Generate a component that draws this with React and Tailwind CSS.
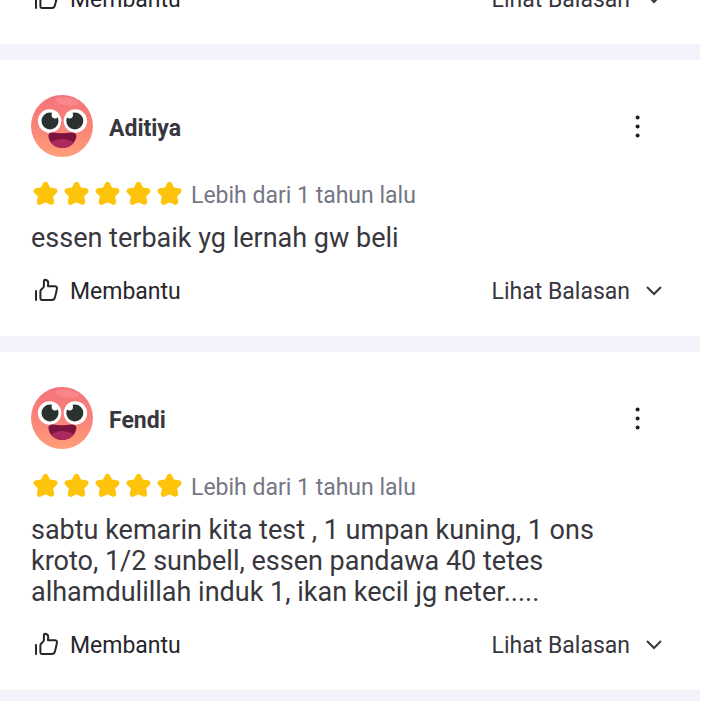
import React, { useState } from 'react';

const reviews = [
  {
    id: 1,
    name: 'Aditiya',
    rating: 5,
    time: 'Lebih dari 1 tahun lalu',
    text: 'essen terbaik yg lernah gw beli',
  },
  {
    id: 2,
    name: 'Fendi',
    rating: 5,
    time: 'Lebih dari 1 tahun lalu',
    text: 'sabtu kemarin kita test , 1 umpan kuning, 1 ons kroto, 1/2 sunbell, essen pandawa 40 tetes alhamdulillah induk 1, ikan kecil jg neter.....',
  },
];

const Avatar = ({ id }) => (
  <svg viewBox="0 0 62 62" className="size-[62px] shrink-0" aria-hidden="true">
    <defs>
      <linearGradient id={`face-${id}`} x1="0" y1="0" x2="0" y2="1">
        <stop offset="0" stopColor="#f3737a" />
        <stop offset="0.5" stopColor="#f98279" />
        <stop offset="1" stopColor="#ff9f78" />
      </linearGradient>
      <clipPath id={`mouth-${id}`}>
        <path d="M17.4 41 C17.4 38.4 19.4 37.2 22 37.6 Q31 39 40 37.6 C43 37.2 45.4 38.4 45.4 41 C44.8 47.5 39 53 31.4 53 C23.8 53 18 47.5 17.4 41Z" />
      </clipPath>
    </defs>
    <circle cx="31" cy="31" r="31" fill={`url(#face-${id})`} />
    <ellipse cx="36" cy="6.5" rx="12" ry="4" fill="#f8868b" transform="rotate(8 36 6.5)" />
    {/* eyes */}
    <circle cx="18.6" cy="26" r="11.7" fill="#fff" />
    <circle cx="44.4" cy="26" r="11.7" fill="#fff" />
    <circle cx="19" cy="26" r="8.5" fill="#2b312f" />
    <circle cx="43.8" cy="26" r="8.5" fill="#2b312f" />
    <circle cx="24" cy="20" r="3.4" fill="#fff" />
    <circle cx="38.6" cy="20" r="3.4" fill="#fff" />
    {/* mouth */}
    <g clipPath={`url(#mouth-${id})`}>
      <rect x="15" y="35" width="32" height="20" fill="#7c1240" />
      <ellipse cx="31.4" cy="50.5" rx="12.5" ry="6.5" fill="#ab2a5b" />
    </g>
  </svg>
);

const Star = () => (
  <svg viewBox="0 0 25 25" className="size-[25px]" aria-hidden="true">
    <path
      d="M12.5 3.6 L15.1 9 L21.6 10 L17.1 14.6 L18.4 21 L12.5 18.2 L6.6 21 L7.9 14.6 L3.4 10 L9.9 9Z"
      fill="#fdc40b"
      stroke="#fdc40b"
      strokeWidth="5.6"
      strokeLinejoin="round"
    />
  </svg>
);

const ThumbIcon = () => (
  <svg
    viewBox="0 0 24 24"
    className="size-6"
    fill="none"
    stroke="currentColor"
    strokeWidth="2"
    strokeLinecap="round"
    strokeLinejoin="round"
    aria-hidden="true"
  >
    <path d="M2 13 V22" />
    <path d="M6.4 20.6 V13.4 Q6.4 12.4 7.1 11.7 L9.2 9.6 Q9.9 8.9 9.9 8 V3.6 Q9.9 1.8 11.2 1.8 C13.4 2.1 14.4 3.6 14.2 5.6 L14 8.2 H20.8 Q23.2 8.2 22.9 10.6 L22.2 14.6 L20.8 19.8 Q20.2 22 18 22 H7.8 Q6.4 22 6.4 20.6Z" />
  </svg>
);

const ReviewActions = () => {
  const [helpful, setHelpful] = useState(false);
  const [open, setOpen] = useState(false);

  return (
    <div className="flex items-center justify-between text-[23px] leading-8">
      <button
        type="button"
        aria-pressed={helpful}
        onClick={() => setHelpful(!helpful)}
        className="flex items-start gap-3 pl-[3px] text-[#26262b]"
      >
        <span className="pt-[2px]">
          <ThumbIcon />
        </span>
        Membantu
      </button>
      <button
        type="button"
        aria-expanded={open}
        onClick={() => setOpen(!open)}
        className="flex items-center gap-4 text-[#37373d]"
      >
        Lihat Balasan
        <svg viewBox="0 0 16 16" className="size-4" fill="none" stroke="currentColor" strokeWidth="2" aria-hidden="true">
          <path d="M1 3 L8 10 L15 3" />
        </svg>
      </button>
    </div>
  );
};

const ReviewCard = ({ review }) => (
  <article className="pt-[35px] pr-[39px] pb-7 pl-[31px]">
    <div className="flex items-center gap-4">
      <Avatar id={review.id} />
      <h3 className="grow pt-[6px] text-[23px] leading-8 font-bold text-[#37373d]">{review.name}</h3>
      <button type="button" aria-label="Opsi lainnya" className="flex size-12 items-center justify-center">
        <svg viewBox="0 0 24 24" className="size-6" fill="#1f1f23" aria-hidden="true">
          <circle cx="11.6" cy="3.5" r="2" />
          <circle cx="11.6" cy="12.5" r="2" />
          <circle cx="11.6" cy="21.5" r="2" />
        </svg>
      </button>
    </div>
    <div className="mt-[23px] flex items-start gap-[9px]">
      <div className="flex gap-[6px] pt-px pl-[2px]" role="img" aria-label={`${review.rating} dari 5`}>
        {Array.from({ length: review.rating }, (_, i) => (
          <Star key={i} />
        ))}
      </div>
      <span className="text-[23px] leading-8 text-[#747684]">{review.time}</span>
    </div>
    <p className="mt-[11px] mb-[22px] text-[27px] leading-[31px] text-[#37373d]">{review.text}</p>
    <ReviewActions />
  </article>
);

const Divider = () => <div className="mr-px h-4 bg-[#f5f2fc]" />;

export default function App() {
  return (
    <main className="min-h-screen overflow-hidden bg-white font-['Roboto',sans-serif]">
      {/* tail of the previous review, scrolled out of view */}
      <div className="-mt-4 pr-[39px] pb-7 pl-[31px]">
        <ReviewActions />
      </div>
      {reviews.map((review) => (
        <React.Fragment key={review.id}>
          <Divider />
          <ReviewCard review={review} />
        </React.Fragment>
      ))}
      <Divider />
    </main>
  );
}
